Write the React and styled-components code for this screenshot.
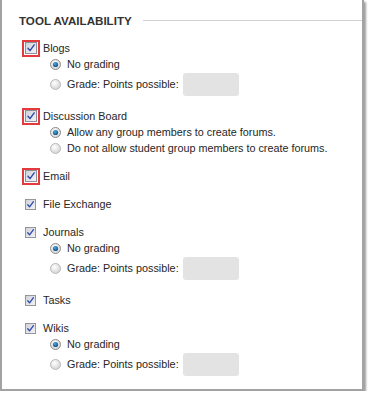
import React from "react";
import styled, { createGlobalStyle } from "styled-components";

const Global = createGlobalStyle`
  html, body { margin: 0; padding: 0; background: #ffffff; }
  body { font-family: "Liberation Sans", Arial, sans-serif; color: #262626; }
`;

const Frame = styled.div`
  box-sizing: border-box;
  width: 364px;
  height: 391px;
  background: #fff;
  border: 2px solid #a3a3a3;
  border-top: none;
  box-shadow: 2px 2px 2px rgba(0, 0, 0, 0.38);
  display: flex;
  flex-direction: column;
`;

const Heading = styled.div`
  display: flex;
  align-items: center;
  height: 19px;
  margin-top: 11px;
  padding-left: 17px;
  gap: 11px;
`;

const Title = styled.h2`
  margin: 0;
  font-size: 11.6px;
  font-weight: bold;
  color: #333;
  white-space: nowrap;
`;

const Rule = styled.div`
  flex: 1;
  height: 1px;
  background: #d2d2d2;
  margin-top: -1px;
`;

const List = styled.div`
  display: flex;
  flex-direction: column;
  gap: 12px;
  margin-top: 10px;
  padding-left: 19px;
`;

const Tool = styled.div`
  display: flex;
  flex-direction: column;
`;

const LabelRow = styled.label`
  display: flex;
  align-items: center;
  height: 16px;
  font-size: 10.8px;
`;

const CheckCell = styled.span`
  width: 19px;
  display: flex;
  justify-content: center;
  align-items: center;
  margin-right: 3px;
`;

const RedMark = styled.span`
  display: flex;
  align-items: center;
  justify-content: center;
  box-sizing: border-box;
  width: 18px;
  height: 17px;
  border: 2px solid #e23a3d;
  background: #fff;
`;

const Options = styled.div`
  display: flex;
  flex-direction: column;
  margin-left: 29px;
`;

const OptionRow = styled.label`
  display: flex;
  align-items: center;
  height: ${(p) => (p.$grade ? 24 : 16)}px;
  font-size: 10.8px;
  gap: 6px;
`;

const GradeInput = styled.span`
  display: inline-block;
  width: 56px;
  height: 23px;
  background: #e3e3e3;
  border-radius: 3px;
  margin-left: -2px;
`;

const CheckIcon = ({ big }) => (
  <svg width={big ? 12 : 11} height={big ? 12 : 11} viewBox="0 0 12 12">
    <defs>
      <linearGradient id="cbg" x1="0" y1="0" x2="1" y2="1">
        <stop offset="0" stopColor="#cfd1da" />
        <stop offset="1" stopColor="#f4f4f6" />
      </linearGradient>
    </defs>
    <rect x="0.5" y="0.5" width="11" height="11" fill="url(#cbg)" stroke="#8e8e96" />
    <path d="M3 6.3 L5 8.6 L9.2 2.9" fill="none" stroke="#2a48a8" strokeWidth="1.4" strokeLinecap="round" strokeLinejoin="round" />
  </svg>
);

const RadioIcon = ({ checked }) => (
  <svg width="11" height="11" viewBox="0 0 11 11">
    <defs>
      <radialGradient id="rg" cx="0.4" cy="0.35" r="0.7">
        <stop offset="0" stopColor="#ffffff" />
        <stop offset="1" stopColor="#d2d2d2" />
      </radialGradient>
      <radialGradient id="rd" cx="0.4" cy="0.35" r="0.7">
        <stop offset="0" stopColor="#4aa8e0" />
        <stop offset="1" stopColor="#0d4f80" />
      </radialGradient>
    </defs>
    <circle cx="5.5" cy="5.5" r="5" fill="url(#rg)" stroke={checked ? "#8a8a8a" : "#b8b8b8"} />
    {checked && <circle cx="5.5" cy="5.5" r="2.6" fill="url(#rd)" />}
  </svg>
);

const tools = [
  {
    label: "Blogs",
    marked: true,
    options: [{ text: "No grading", checked: true }, { text: "Grade: Points possible:", grade: true }],
  },
  {
    label: "Discussion Board",
    marked: true,
    options: [
      { text: "Allow any group members to create forums.", checked: true },
      { text: "Do not allow student group members to create forums." },
    ],
  },
  { label: "Email", marked: true, options: [] },
  { label: "File Exchange", options: [] },
  {
    label: "Journals",
    options: [{ text: "No grading", checked: true }, { text: "Grade: Points possible:", grade: true }],
  },
  { label: "Tasks", options: [] },
  {
    label: "Wikis",
    options: [{ text: "No grading", checked: true }, { text: "Grade: Points possible:", grade: true }],
  },
];

export default function App() {
  return (
    <>
      <Global />
      <Frame>
        <Heading>
          <Title>TOOL AVAILABILITY</Title>
          <Rule />
        </Heading>
        <List>
          {tools.map((t) => (
            <Tool key={t.label}>
              <LabelRow>
                <CheckCell>
                  {t.marked ? (
                    <RedMark>
                      <CheckIcon big />
                    </RedMark>
                  ) : (
                    <CheckIcon />
                  )}
                </CheckCell>
                {t.label}
              </LabelRow>
              {t.options.length > 0 && (
                <Options>
                  {t.options.map((o) => (
                    <OptionRow key={o.text} $grade={o.grade}>
                      <RadioIcon checked={o.checked} />
                      {o.text}
                      {o.grade && <GradeInput />}
                    </OptionRow>
                  ))}
                </Options>
              )}
            </Tool>
          ))}
        </List>
      </Frame>
    </>
  );
}
